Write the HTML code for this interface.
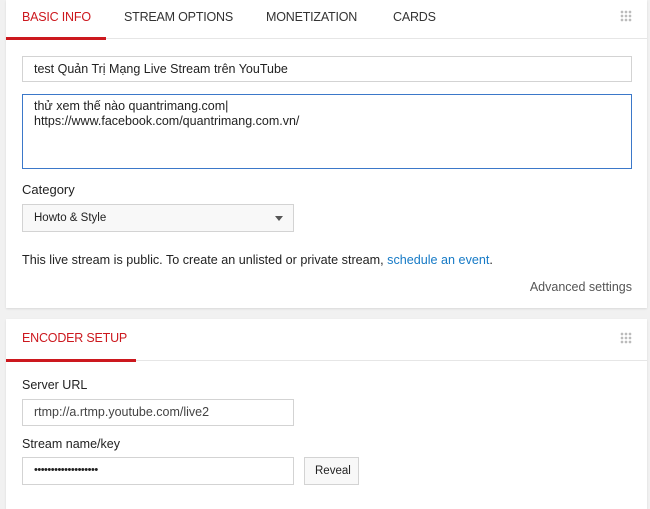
<!DOCTYPE html>
<html><head><meta charset="utf-8"><style>
*{box-sizing:border-box;margin:0;padding:0}
body{width:650px;height:500px;background:#f1f1f1;font-family:"Liberation Sans",sans-serif;color:#222;position:relative;overflow:hidden;font-size:12.5px}
.card{position:absolute;left:6px;width:641px;background:#fff;box-shadow:0 1px 2px rgba(0,0,0,.1)}
.abs{position:absolute;white-space:nowrap}
.tab{position:absolute;top:10px;font-size:12.5px;color:#333;letter-spacing:-0.2px}
.box{position:absolute;border:1px solid #d3d3d3;background:#fff;padding-left:11px;line-height:24px;font-size:12.5px;white-space:nowrap}
.grip{position:absolute;width:12px;height:12px;background-image:radial-gradient(#bbb 1.2px,transparent 1.5px);background-size:4px 4px}
</style></head><body>
<div class="card" style="top:0;height:308px">
 <div class="tab" style="left:16px;color:#cc181e">BASIC INFO</div>
 <div class="tab" style="left:118px">STREAM OPTIONS</div>
 <div class="tab" style="left:260px">MONETIZATION</div>
 <div class="tab" style="left:387px">CARDS</div>
 <div class="grip" style="left:614px;top:10px"></div>
 <div class="abs" style="left:0;top:38px;width:641px;height:1px;background:#e6e6e6"></div>
 <div class="abs" style="left:0;top:37px;width:100px;height:3px;background:#cc181e"></div>
 <div class="box" style="left:16px;top:56px;width:610px;height:26px">test Quản Trị Mạng Live Stream trên YouTube</div>
 <div class="box" style="left:16px;top:94px;width:610px;height:75px;border-color:#3b78c9;line-height:15px;padding-top:4px">thử xem thế nào quantrimang.com|<br>https://www.facebook.com/quantrimang.com.vn/</div>
 <div class="abs" style="left:16px;top:182px;font-size:13px">Category</div>
 <div class="box" style="left:16px;top:204px;width:272px;height:28px;background:#f8f8f8;line-height:26px;font-size:11.5px">Howto &amp; Style<span style="position:absolute;right:10px;top:11px;border:4px solid transparent;border-top:5px solid #555;border-bottom:0"></span></div>
 <div class="abs" style="left:16px;top:253px;font-size:12.6px">This live stream is public. To create an unlisted or private stream, <span style="color:#167ac6">schedule an event</span>.</div>
 <div class="abs" style="right:15px;top:280px;font-size:12.5px;color:#555">Advanced settings</div>
</div>
<div class="card" style="top:319px;height:190px">
 <div class="tab" style="left:16px;top:12px;color:#cc181e">ENCODER SETUP</div>
 <div class="grip" style="left:614px;top:13px"></div>
 <div class="abs" style="left:0;top:41px;width:641px;height:1px;background:#e6e6e6"></div>
 <div class="abs" style="left:0;top:40px;width:130px;height:3px;background:#cc181e"></div>
 <div class="abs" style="left:16px;top:59px;font-size:12.5px">Server URL</div>
 <div class="box" style="left:16px;top:80px;width:272px;height:27px;color:#444">rtmp://a.rtmp.youtube.com/live2</div>
 <div class="abs" style="left:16px;top:118px;font-size:12.5px">Stream name/key</div>
 <div class="box" style="left:16px;top:138px;width:272px;height:28px;letter-spacing:-0.5px;font-size:11px">•••••••••••••••••••</div>
 <div class="box" style="left:298px;top:138px;width:55px;height:28px;background:#f8f8f8;padding-left:10px;font-size:11.5px;line-height:26px">Reveal</div>
</div>
</body></html>
